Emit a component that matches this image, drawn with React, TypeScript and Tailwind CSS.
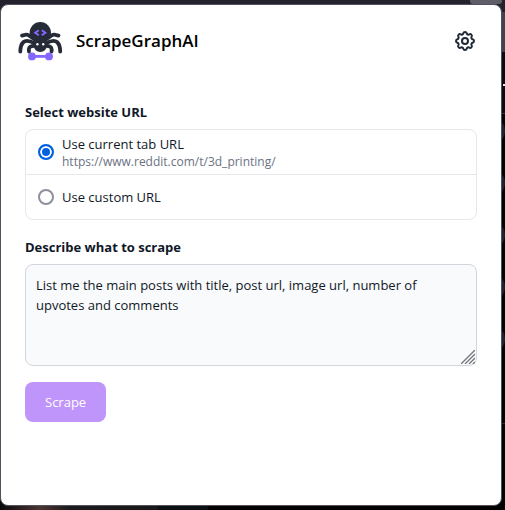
import React, { useState } from "react";

function SpiderLogo() {
  return (
    <svg viewBox="0 0 46 40" className="h-10 w-[46px] shrink-0" fill="none" role="img" aria-label="ScrapeGraphAI logo">
      <g stroke="#262b38" strokeWidth="3.800" strokeLinecap="round" strokeLinejoin="round">
        <path d="M15.500 17 L11.500 14.300 Q10 13.200 8 13.800 L5 14.600" />
        <path d="M31 17 L35 14.300 Q36.500 13.200 38.500 13.800 L41.500 14.600" />
        <path d="M18 22.500 Q10 18 6.500 21 Q3.300 24 3.300 30.500" />
        <path d="M28.500 22.500 Q36.500 18 40 21 Q43.200 24 43.200 30.500" />
        <path d="M18 25 Q12 24.500 11.800 28.500 L12 30.500" />
        <path d="M28.500 25 Q34.500 24.500 34.700 28.500 L34.500 30.500" />
      </g>
      <ellipse cx="23.300" cy="25" rx="6.500" ry="6" fill="#262b38" />
      <circle cx="23.300" cy="11.700" r="10.700" fill="#262b38" />
      <circle cx="20.400" cy="23.300" r="1.200" fill="#fff" />
      <circle cx="26.200" cy="23.300" r="1.200" fill="#fff" />
      <path d="M21.800 9.300 18.300 11.700l3.500 2.500M24.800 9.300l3.500 2.400-3.500 2.500" stroke="#8566ff" strokeWidth="2" />
      <g fill="#8566ff">
        <rect x="15" y="34" width="17" height="2.800" />
        <circle cx="15" cy="35.400" r="3.900" />
        <circle cx="32" cy="35.400" r="3.900" />
      </g>
    </svg>
  );
}

function GearIcon() {
  return (
    <svg viewBox="0 0 24 24" className="size-6" fill="none" stroke="#1f2937" strokeWidth="2" strokeLinecap="round" strokeLinejoin="round" aria-hidden="true">
      <path d="M10.325 4.317c.426-1.756 2.924-1.756 3.350 0a1.724 1.724 0 0 0 2.573 1.066c1.543-.940 3.310.826 2.370 2.370a1.724 1.724 0 0 0 1.065 2.572c1.756.426 1.756 2.924 0 3.350a1.724 1.724 0 0 0-1.066 2.573c.940 1.543-.826 3.310-2.370 2.370a1.724 1.724 0 0 0-2.572 1.065c-.426 1.756-2.924 1.756-3.350 0a1.724 1.724 0 0 0-2.573-1.066c-1.543.940-3.310-.826-2.370-2.370a1.724 1.724 0 0 0-1.065-2.572c-1.756-.426-1.756-2.924 0-3.350a1.724 1.724 0 0 0 1.066-2.573c-.940-1.543.826-3.310 2.370-2.370 1 .608 2.296.070 2.572-1.065z" />
      <circle cx="12" cy="12" r="3" />
    </svg>
  );
}

/* Slivers of the browser window that show round the popup's edges. */
function Backdrop() {
  return (
    <div aria-hidden="true" className="absolute inset-0 -z-10 overflow-hidden bg-black">
      <svg className="absolute top-0 right-0 h-full w-10" fill="none">
        <rect width="40" height="12" fill="#24232d" />
        <rect x="5" y="-4" width="32" height="8" rx="3" fill="#5f5d68" />
        <rect y="12" width="40" height="40" fill="#42414d" />
        <rect y="52" width="40" height="61" fill="#080d10" />
        <rect x="38" y="84" width="2" height="2" fill="#e5e7eb" />
        <rect y="113" width="40" height="1" fill="#343c40" />
        <rect y="423" width="40" height="1" fill="#2b2f31" />
        {[131, 183, 235, 287, 339].map((y) => (
          <circle key={y} cx="26" cy={y} r="14" fill="#1c2529" />
        ))}
      </svg>
      <div className="absolute top-0 right-10 left-0 h-3 bg-[#24232d]" />
      <div className="absolute bottom-0 left-0 h-3 w-52 bg-[linear-gradient(90deg,#0b0b0b_0px,#4a3532_40px,#1c1a1c_70px,#1a1718_157px,#0b1013_158px)]" />
    </div>
  );
}

const radioClass =
  "size-4 shrink-0 appearance-none rounded-full border-2 border-[#8f8f9d] bg-white checked:border-[#0060df] checked:bg-[#0060df] checked:shadow-[inset_0_0_0_2px_white]";

export default function App() {
  const [source, setSource] = useState("current");
  const [prompt, setPrompt] = useState(
    "List me the main posts with title, post url, image url, number of upvotes and comments",
  );

  return (
    <div className="relative isolate flex min-h-screen flex-col pt-1 pr-[3px] pb-1 font-['Open_Sans','Noto_Sans',sans-serif] text-[13px] text-gray-900">
      <Backdrop />
      <main className="flex flex-1 flex-col rounded-lg border border-[#52525e] bg-white">
        <header className="flex items-center justify-between py-4 pr-6 pl-4">
          <div className="flex items-center gap-[13px]">
            <SpiderLogo />
            <h1 className="text-[17px] leading-7 font-semibold text-black">ScrapeGraphAI</h1>
          </div>
          <button type="button" aria-label="Settings">
            <GearIcon />
          </button>
        </header>

        <form className="flex flex-col items-start px-6 pt-[25px]" onSubmit={(e) => e.preventDefault()}>
          <fieldset className="w-full">
            <legend className="mb-[7px] leading-5 font-bold">Select website URL</legend>
            <div className="divide-y divide-gray-200 rounded-lg border border-gray-200">
              <label className="flex items-center gap-2 px-3 py-1">
                <input type="radio" name="source" className={radioClass} checked={source === "current"} onChange={() => setSource("current")} />
                <span className="flex flex-col">
                  <span className="leading-5">Use current tab URL</span>
                  <span className="text-xs leading-4 text-gray-500">https://www.reddit.com/t/3d_printing/</span>
                </span>
              </label>
              <label className="flex items-center gap-2 px-3 py-3">
                <input type="radio" name="source" className={radioClass} checked={source === "custom"} onChange={() => setSource("custom")} />
                <span className="leading-5">Use custom URL</span>
              </label>
            </div>
          </fieldset>

          <label htmlFor="prompt" className="mt-[17px] mb-[7px] leading-5 font-bold">
            Describe what to scrape
          </label>
          <div className="relative w-full">
            <textarea
              id="prompt"
              rows={4}
              className="block w-full rounded-lg border border-gray-300 bg-gray-50 p-2.5 leading-5 [&::-webkit-resizer]:hidden"
              value={prompt}
              onChange={(e) => setPrompt(e.target.value)}
            />
            <svg viewBox="0 0 14 14" className="pointer-events-none absolute right-0.5 bottom-0.5 size-3.5" stroke="#74747a" strokeWidth="1.300" aria-hidden="true">
              <path d="M0 14 14 0M4 14 14 4M8 14l6-6M12 14l2-2" />
            </svg>
          </div>
          <button type="submit" className="mt-4 rounded-lg bg-[#bf94fb] px-5 py-2.5 leading-5 text-white">
            Scrape
          </button>
        </form>
      </main>
    </div>
  );
}
